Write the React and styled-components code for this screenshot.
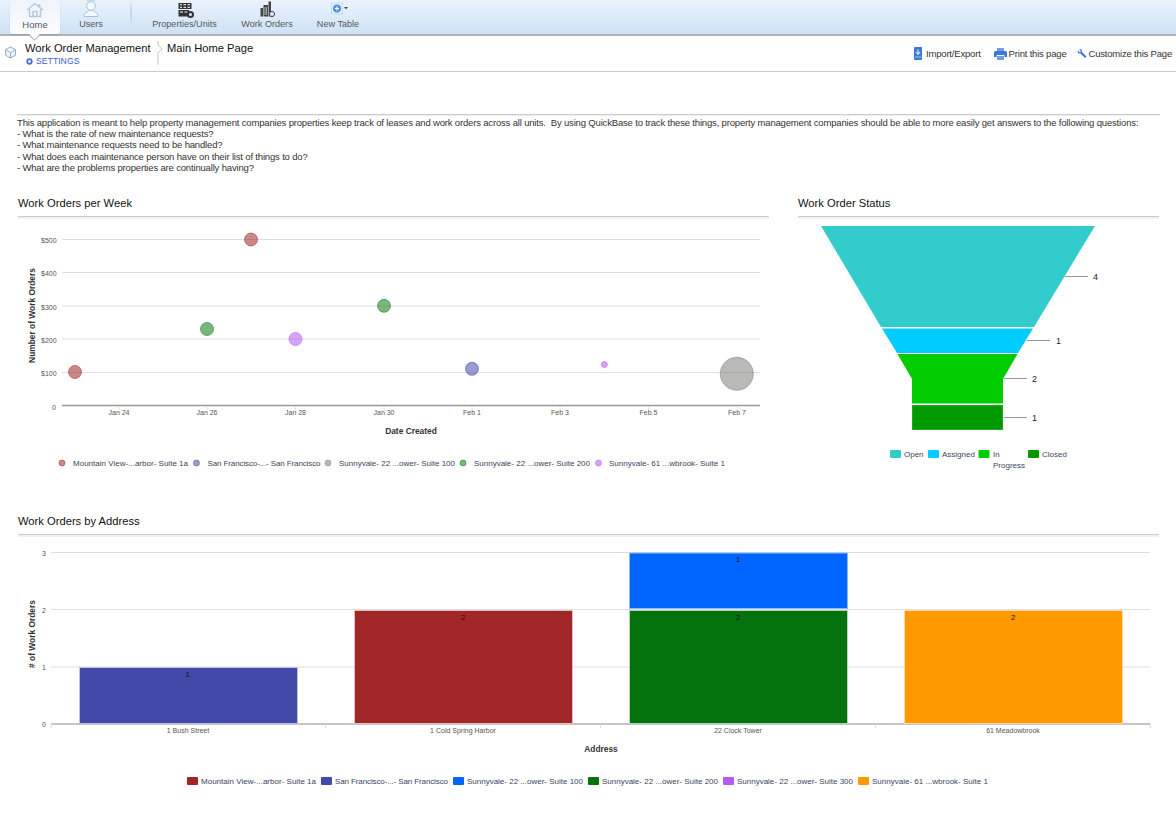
import React from "react";
import styled, { createGlobalStyle } from "styled-components";

const Global = createGlobalStyle`
  html, body { margin: 0; padding: 0; background: #fff; }
  body { font-family: "Liberation Sans", Arial, sans-serif; color: #222; }
`;

const Page = styled.div`
  width: 1176px;
  height: 832px;
  overflow: hidden;
  background: #fff;
`;

const NavBar = styled.nav`
  height: 34px;
  display: flex;
  align-items: stretch;
  padding-left: 10px;
  background: linear-gradient(#eaf3fc, #cfe2f6);
  border-bottom: 2px solid #b0b4b8;
`;

const NavItem = styled.a`
  position: relative;
  width: ${(p) => p.$w}px;
  margin-right: ${(p) => p.$mr || 0}px;
  display: flex;
  flex-direction: column;
  align-items: center;
  justify-content: flex-end;
  padding-bottom: 4px;
  box-sizing: border-box;
  height: 34px;
  font-size: ${(p) => (p.$active ? 9.5 : 9.1)}px;
  line-height: 11px;
  color: #55585c;
  ${(p) =>
    p.$active &&
    `background: linear-gradient(#eef4fb, #fbfcfe);
     box-shadow: 0 1px 1px #9aa0a6;
     border-radius: 0 0 2px 2px;
     &:after { content: ""; position: absolute; left: 21px; bottom: -4px; width: 7px; height: 7px;
       background: #fbfcfe; transform: rotate(45deg); box-shadow: 1px 1px 1px #a9adb2; }`}
`;

const NavIcon = styled.svg`
  display: block;
  width: 22px;
  height: 20px;
  margin-bottom: -1px;
  position: relative;
  z-index: 1;
`;

const NavDivider = styled.div`
  width: 2px;
  align-self: stretch;
  margin: 2px 0 8px;
  background: linear-gradient(#d6e6f5, #bcd6ee, #d6e6f5);
`;

const SubHeader = styled.header`
  height: 35px;
  display: flex;
  align-items: flex-start;
  border-bottom: 1px solid #ccc;
`;

const CubeIcon = styled.svg`
  width: 13px;
  height: 13px;
  margin: 10px 8px 0 4px;
  flex: none;
`;

const AppBlock = styled.div`
  width: 132px;
  padding-top: 5px;
`;

const AppName = styled.div`
  font-size: 11.15px;
  line-height: 14px;
  color: #111;
  white-space: nowrap;
`;

const Settings = styled.a`
  display: flex;
  align-items: center;
  gap: 3px;
  font-size: 8.7px;
  line-height: 11px;
  margin-top: 1px;
  padding-left: 1px;
  color: #3f5bd0;
  svg { width: 7px; height: 7px; }
`;

const Chevron = styled.svg`
  width: 6px;
  height: 24px;
  margin-top: 5px;
  flex: none;
`;

const PageName = styled.div`
  margin-left: 4px;
  padding-top: 5px;
  font-size: 11.15px;
  line-height: 14px;
  color: #111;
`;

const Actions = styled.div`
  margin-left: auto;
  display: flex;
  align-items: center;
  height: 35px;
  box-sizing: border-box;
  padding-right: 4px;
`;

const Action = styled.a`
  display: flex;
  align-items: center;
  gap: ${(p) => p.$gap ?? 2}px;
  margin-left: ${(p) => p.$ml}px;
  font-size: 9.5px;
  color: #333;
  letter-spacing: -0.02em;
`;

const Intro = styled.section`
  margin: 42px 16px 0 17px;
  border-top: 1px solid #ccc;
  box-shadow: inset 0 1px 0 #eee;
  padding-top: 2px;
  font-size: 9.5px;
  letter-spacing: -0.17px;
  line-height: 11.2px;
  color: #333;
  height: 71px;
  box-sizing: border-box;
`;

const IntroLine = styled.div`
  white-space: pre;
`;

const ChartRow = styled.div`
  display: flex;
  margin-top: ${(p) => p.$mt}px;
  padding-left: 18px;
`;

const Panel = styled.section`
  width: ${(p) => p.$w}px;
  margin-right: ${(p) => p.$mr || 0}px;
  flex: none;
`;

const PanelTitle = styled.h2`
  margin: 0;
  height: 23px;
  box-sizing: border-box;
  padding-top: 2px;
  font-size: 11.2px;
  line-height: 14px;
  font-weight: normal;
  color: #111;
  border-bottom: 1px solid #ccc;
`;

const PanelRule = styled.div`
  height: 2px;
  background: #f1f1f1;
`;

const Chart = styled.svg`
  display: block;
  font-family: "Liberation Sans", Arial, sans-serif;
`;

const Tick = styled.text`
  font-size: 7px;
  fill: #555;
`;

const AxisTitle = styled.text`
  font-size: 8.4px;
  font-weight: bold;
  fill: #333;
`;

const Legend = styled.text`
  font-size: 8px;
  fill: #3c4560;
`;

const ValueLabel = styled.text`
  font-size: 9px;
  fill: #222;
`;

const BarLabel = styled.text`
  font-size: 7.5px;
  fill: #111;
  text-anchor: middle;
`;

const bubbles = [
  [75, 372, 6.5, "#a02628"],
  [251, 239.5, 6.5, "#a02628"],
  [207, 329, 6.5, "#0f7a12"],
  [384, 305.8, 6.5, "#0f7a12"],
  [295.5, 339, 6.5, "#b55af5"],
  [472, 368.8, 6.5, "#4249a8"],
  [604.4, 364.5, 3, "#b55af5"],
  [736.8, 373.8, 16.5, "#7f817d"],
];

function BubbleChart() {
  const gy = [239.5, 272.5, 306, 339, 372.5];
  const labels = ["$500", "$400", "$300", "$200", "$100"];
  const dates = [
    [119, "Jan 24"], [207, "Jan 26"], [295.5, "Jan 28"], [384, "Jan 30"],
    [472, "Feb 1"], [560, "Feb 3"], [648.5, "Feb 5"], [737, "Feb 7"],
  ];
  const legend = [
    [62, 73, "#a02628", "Mountain View-...arbor- Suite 1a", 115],
    [196.5, 207.5, "#4249a8", "San Francisco-...- San Francisco", 113],
    [328, 339, "#7f817d", "Sunnyvale- 22 ...ower- Suite 100", 116],
    [463, 474, "#0f7a12", "Sunnyvale- 22 ...ower- Suite 200", 116],
    [598.5, 609, "#b55af5", "Sunnyvale- 61 ...wbrook- Suite 1", 116],
  ];
  return (
    <Chart width="751" height="260" viewBox="18 219 751 260">
      {gy.map((y, i) => (
        <g key={y}>
          <line x1="62" x2="760" y1={y} y2={y} stroke="#dedede" strokeWidth="1" />
          <Tick x="41" y={y + 3.5}>{labels[i]}</Tick>
        </g>
      ))}
      <Tick x="52" y="409.5">0</Tick>
      <line x1="62" x2="760" y1="405.5" y2="405.5" stroke="#999" strokeWidth="1.5" />
      {dates.map(([x, t]) => (
        <g key={t}>
          <line x1={x} x2={x} y1="406" y2="410" stroke="#d8e2ec" />
          <Tick x={x} y="414.5" textAnchor="middle">{t}</Tick>
        </g>
      ))}
      <AxisTitle transform="translate(34.5 315.5) rotate(-90)" textAnchor="middle">Number of Work Orders</AxisTitle>
      <AxisTitle x="411" y="434" textAnchor="middle">Date Created</AxisTitle>
      {bubbles.map(([x, y, r, c]) => (
        <circle key={x} cx={x} cy={y} r={r} fill={c} fillOpacity="0.55" stroke={c} strokeOpacity="0.55" />
      ))}
      {legend.map(([dx, tx, c, t, len]) => (
        <g key={t}>
          <circle cx={dx} cy="463" r="3" fill={c} fillOpacity="0.55" stroke={c} strokeOpacity="0.5" />
          <Legend x={tx} y="466" textLength={len}>{t}</Legend>
        </g>
      ))}
    </Chart>
  );
}

function Funnel() {
  const lines = [
    [1065, 1088, 276.5, "4", 1093, 279.5],
    [1027, 1050, 340.5, "1", 1056, 344],
    [1004, 1027, 378.5, "2", 1032, 382],
    [1004, 1027, 417.5, "1", 1032, 421],
  ];
  const legend = [
    [890, "#33cccc", "Open", 904],
    [928, "#00ccff", "Assigned", 942],
    [978.5, "#00cc00", "In", 993],
    [1028, "#009900", "Closed", 1042],
  ];
  return (
    <Chart width="361" height="260" viewBox="798 219 361 260">
      <polygon points="821,226 1095,226 1034,327 881,327" fill="#33cccc" />
      <polygon points="882,328.5 1033,328.5 1018,353 897,353" fill="#00ccff" />
      <polygon points="897.5,354 1017.5,354 1003,379 1003,403.5 912,403.5 912,379" fill="#00cc00" />
      <rect x="912" y="405" width="91" height="25" fill="#009900" />
      <rect x="912.5" y="405.5" width="90" height="24" fill="none" stroke="#33b533" strokeOpacity=".6" />
      {lines.map(([x1, x2, y, t, tx, ty]) => (
        <g key={tx + t + y}>
          <line x1={x1} x2={x2} y1={y} y2={y} stroke="#999" strokeWidth="1" />
          <ValueLabel x={tx} y={ty}>{t}</ValueLabel>
        </g>
      ))}
      {legend.map(([x, c, t, tx]) => (
        <g key={t}>
          <rect x={x} y="450" width="11" height="8" rx="1" fill={c} />
          <Legend x={tx} y="457">{t}</Legend>
        </g>
      ))}
      <Legend x="993" y="468">Progress</Legend>
    </Chart>
  );
}

function StackedBars() {
  const gy = [552.5, 609.5, 667, 724];
  const bars = [
    [79, 667, 219, 57, "#4249a8", "#bfc2e2"],
    [354, 610, 219, 114, "#a02628", "#e0bfc0"],
    [629, 610, 219, 114, "#03720d", "#b5d4b7"],
    [629, 552.5, 219, 56.5, "#0066ff", "#8db9ff"],
    [904, 610, 219, 114, "#ff9900", "#ffdca6"],
  ];
  const legend = [
    [187, "#a02628", "Mountain View-...arbor- Suite 1a", 201, 115],
    [321, "#4249a8", "San Francisco-...- San Francisco", 335, 113],
    [453, "#0066ff", "Sunnyvale- 22 ...ower- Suite 100", 467, 116],
    [588, "#03720d", "Sunnyvale- 22 ...ower- Suite 200", 602, 116],
    [723, "#b55af5", "Sunnyvale- 22 ...ower- Suite 300", 737, 116],
    [858, "#ff9900", "Sunnyvale- 61 ...wbrook- Suite 1", 872, 116],
  ];
  return (
    <Chart width="1141" height="260" viewBox="18 537 1141 260">
      {gy.map((y, i) => (
        <g key={y}>
          <line x1="51" x2="1150" y1={y} y2={y} stroke="#dedede" />
          <Tick x="42" y={y + 3}>{3 - i}</Tick>
        </g>
      ))}
      <line x1="51" x2="1150" y1="724" y2="724" stroke="#999" strokeWidth="1.2" />
      {[51, 325.5, 600.5, 875.5, 1150.5].map((x) => (
        <line key={x} x1={x} x2={x} y1="724" y2="728" stroke="#ddd" />
      ))}
      {bars.map(([x, y, w, h, c, b]) => (
        <rect key={x + "-" + y} x={x + 0.5} y={y + 0.5} width={w - 1} height={h - 1} fill={c} stroke={b} />
      ))}
      <BarLabel x="187.5" y="677">1</BarLabel>
      <BarLabel x="463" y="620">2</BarLabel>
      <BarLabel x="738" y="562">1</BarLabel>
      <BarLabel x="738" y="620">2</BarLabel>
      <BarLabel x="1013" y="620">2</BarLabel>
      <Tick x="188" y="733" textAnchor="middle">1 Bush Street</Tick>
      <Tick x="463" y="733" textAnchor="middle">1 Cold Spring Harbor</Tick>
      <Tick x="738" y="733" textAnchor="middle">22 Clock Tower</Tick>
      <Tick x="1013" y="733" textAnchor="middle">61 Meadowbrook</Tick>
      <AxisTitle transform="translate(34.5 634) rotate(-90)" textAnchor="middle"># of Work Orders</AxisTitle>
      <AxisTitle x="601" y="751.5" textAnchor="middle">Address</AxisTitle>
      {legend.map(([x, c, t, tx, len]) => (
        <g key={t}>
          <rect x={x} y="777" width="11" height="8" rx="1" fill={c} />
          <Legend x={tx} y="784" textLength={len}>{t}</Legend>
        </g>
      ))}
    </Chart>
  );
}

const Ico = ({ children }) => (
  <NavIcon viewBox="0 0 22 20">{children}</NavIcon>
);

export default function App() {
  return (
    <Page>
      <Global />
      <NavBar>
        <NavItem $w={50} $active>
          <Ico>
            <path d="M3 10 L11 3.5 L19 10 M5.5 9 V16.5 H16.5 V9 M9 16.5 V11.5 H13 V16.5 M15.5 4 V7" fill="none" stroke="#b3c9de" strokeWidth="1.5" />
          </Ico>
          Home
        </NavItem>
        <NavItem $w={62} $mr={8}>
          <Ico>
            <circle cx="11" cy="6" r="4.4" fill="#f4f9fe" stroke="#a7c3df" />
            <path d="M4 16.5 C4 12.5 8 12 9 10.5 H13 C14 12 18 12.5 18 16.5 Z" fill="#f4f9fe" stroke="#a7c3df" />
            <path d="M7 .7 H15" stroke="#b9d0e6" />
          </Ico>
          Users
        </NavItem>
        <NavDivider />
        <NavItem $w={105} $mr={2}>
          <Ico>
            <path d="M4.5 3 H17.5 V9 H4.5 Z M4.5 10 H15 V16.5 H4.5 Z" fill="#333" />
            <path d="M6 4.7 H8 M9.5 4.7 H12 M13.5 4.7 H16 M6 7.3 H8 M9.5 7.3 H12 M13.5 7.3 H16 M6 12 H9 M10.5 12 H13.5" stroke="#fff" strokeWidth="1" />
            <circle cx="16.5" cy="14.5" r="2.5" fill="#dbe8f4" stroke="#333" strokeWidth="2" />
          </Ico>
          Properties/Units
        </NavItem>
        <NavItem $w={56} $mr={8}>
          <Ico>
            <path d="M7.5 5 H12 V16.5 H7.5 Z M12.5 1.5 H15 V16.5 H12.5 Z M4.5 8 H7 V16.5 H4.5 Z" fill="#444" />
            <path d="M9 7 V15 M10.7 7 V15" stroke="#ccc" strokeWidth=".8" />
            <circle cx="16" cy="14" r="2.6" fill="#dbe8f4" stroke="#444" />
          </Ico>
          Work Orders
        </NavItem>
        <NavItem $w={70}>
          <Ico>
            <rect x="4.5" y="3" width="11" height="11" fill="none" stroke="#a9c6e6" strokeDasharray="1 1" />
            <circle cx="10" cy="8.5" r="4" fill="#4f94dc" />
            <path d="M10 6.5 V10.5 M8 8.5 H12" stroke="#fff" strokeWidth="1.2" />
            <path d="M17 7 H21 L19 9.2 Z" fill="#444" />
          </Ico>
          New Table
        </NavItem>
      </NavBar>
      <SubHeader>
        <CubeIcon viewBox="0 0 13 13">
          <path d="M6.5 1 L11.5 3.7 V9.3 L6.5 12 L1.5 9.3 V3.7 Z M1.5 3.7 L6.5 6.5 L11.5 3.7 M6.5 6.5 V12" fill="#eef4fa" stroke="#8fb0d0" />
        </CubeIcon>
        <AppBlock>
          <AppName>Work Order Management</AppName>
          <Settings>
            <svg viewBox="0 0 8 8"><circle cx="4" cy="4" r="2.6" fill="none" stroke="#3f6fd0" strokeWidth="2" /></svg>
            SETTINGS
          </Settings>
        </AppBlock>
        <Chevron viewBox="0 0 6 24">
          <path d="M1 0 V4 L5 8 L1 12 V24" fill="none" stroke="#c4c4c4" />
        </Chevron>
        <PageName>Main Home Page</PageName>
        <Actions>
          <Action $ml={0} $gap={3}>
            <svg width="10" height="14" viewBox="0 0 10 14">
              <path d="M1 1 Q1 0 2 0 H9 V12 Q9 13 8 13 H2 Q1 13 1 12 Z" fill="#3b78d8" />
              <path d="M5 2.5 V7 M3 5 L5 7.5 L7 5" stroke="#fff" fill="none" />
              <path d="M2 10 H8" stroke="#a9c8f0" />
            </svg>
            Import/Export
          </Action>
          <Action $ml={13} $gap={2}>
            <svg width="13" height="12" viewBox="0 0 13 12">
              <path d="M3 0 H10 V3 H3 Z" fill="#6f9fe0" />
              <path d="M1.5 3 H11.5 Q13 3 13 4.5 V9 H10.5 V7 H2.5 V9 H0 V4.5 Q0 3 1.5 3 Z" fill="#3b78d8" />
              <path d="M3 8 H10 V12 H3 Z" fill="#6f9fe0" />
            </svg>
            Print this page
          </Action>
          <Action $ml={11} $gap={1}>
            <svg width="10" height="10" viewBox="0 0 10 10">
              <path d="M1 1.5 L3 3.5 L4 2.5 L2.3 .6 C4 -.2 5.6 1 5 3 L9.5 7.5 L8 9 L3.5 4.5 C1.5 5 .2 3.5 1 1.5 Z" fill="#3b78d8" />
            </svg>
            Customize this Page
          </Action>
        </Actions>
      </SubHeader>
      <Intro>
        <IntroLine>This application is meant to help property management companies properties keep track of leases and work orders across all units.  By using QuickBase to track these things, property management companies should be able to more easily get answers to the following questions:</IntroLine>
        <IntroLine>- What is the rate of new maintenance requests?</IntroLine>
        <IntroLine>- What maintenance requests need to be handled?</IntroLine>
        <IntroLine>- What does each maintenance person have on their list of things to do?</IntroLine>
        <IntroLine>- What are the problems properties are continually having?</IntroLine>
      </Intro>
      <ChartRow $mt={9}>
        <Panel $w={751} $mr={29}>
          <PanelTitle>Work Orders per Week</PanelTitle>
          <PanelRule />
          <BubbleChart />
        </Panel>
        <Panel $w={361}>
          <PanelTitle>Work Order Status</PanelTitle>
          <PanelRule />
          <Funnel />
        </Panel>
      </ChartRow>
      <ChartRow $mt={33}>
        <Panel $w={1141}>
          <PanelTitle>Work Orders by Address</PanelTitle>
          <PanelRule />
          <StackedBars />
        </Panel>
      </ChartRow>
    </Page>
  );
}
